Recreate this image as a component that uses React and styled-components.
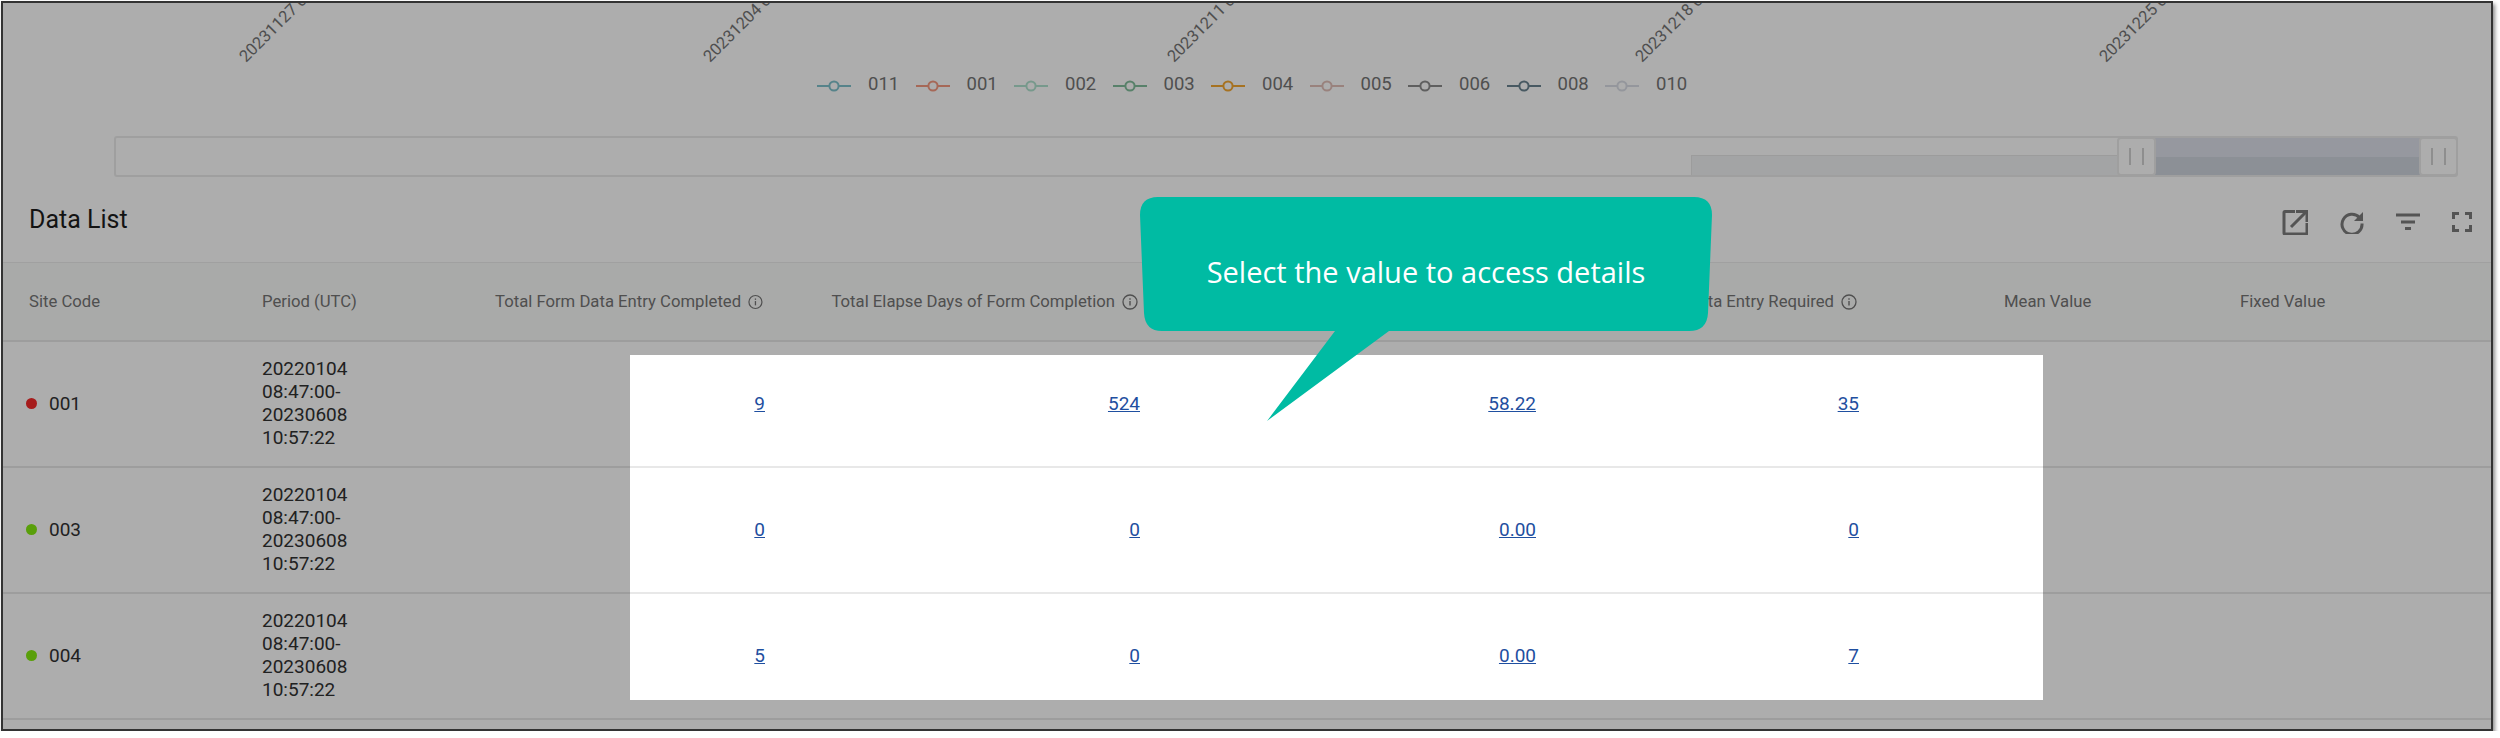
import React from 'react';
import styled, { createGlobalStyle } from 'styled-components';

const GlobalStyle = createGlobalStyle`
  html, body {
    margin: 0;
    padding: 0;
    background: #fff;
    font-family: Roboto, "Liberation Sans", sans-serif;
  }
`;

const legendItems = [
  { code: '011', color: '#7fc2cc' },
  { code: '001', color: '#f59a80' },
  { code: '002', color: '#b0e2cf' },
  { code: '003', color: '#82bf9c' },
  { code: '004', color: '#f5a832' },
  { code: '005', color: '#e2c0b9' },
  { code: '006', color: '#8c8c8c' },
  { code: '008', color: '#6a8491' },
  { code: '010', color: '#dadee6' },
];

const axisLabels = [
  { text: '20231127 00:00:00', x: 243 },
  { text: '20231204 00:00:00', x: 707 },
  { text: '20231211 00:00:00', x: 1171 },
  { text: '20231218 00:00:00', x: 1639 },
  { text: '20231225 00:00:00', x: 2103 },
];

const rows = [
  { code: '001', status: 'bad', values: ['9', '524', '58.22', '35'] },
  { code: '003', status: 'good', values: ['0', '0', '0.00', '0'] },
  { code: '004', status: 'good', values: ['5', '0', '0.00', '7'] },
];

const Frame = styled.div`
  position: relative;
  box-sizing: border-box;
  width: 2492px;
  height: 730px;
  margin: 1px 0 0 1px;
  border: 2px solid #333;
  background: #fff;
  overflow: hidden;
  box-shadow: 2px 3px 4px rgba(0, 0, 0, 0.45);
`;

const Page = styled.div`
  width: 100%;
`;

const ChartAxis = styled.svg`
  display: block;
  width: 100%;
  height: 62px;
  text {
    font-family: Roboto, sans-serif;
    font-size: 16.5px;
    fill: #757575;
  }
`;

const Legend = styled.div`
  display: flex;
  height: 40px;
  padding-left: 814px;
  align-items: center;
`;

const LegendItem = styled.div`
  display: flex;
  width: 98.5px;
  align-items: center;
  gap: 17px;
  font-size: 18.5px;
  color: #757575;
  svg {
    margin-top: 2px;
  }
  span {
    padding-bottom: 2px;
  }
`;

const Zoom = styled.div`
  position: relative;
  box-sizing: border-box;
  width: 2344px;
  height: 41px;
  margin: 31px 0 0 111px;
  border: 2px solid #ebebeb;
  border-radius: 3px;
`;

const ZoomShadow = styled.div`
  position: absolute;
  left: 1575px;
  right: 0;
  bottom: 0;
  height: 19px;
  background: #f1f2f4;
  border-top: 1px solid #e6e6e6;
  border-left: 1px solid #e6e6e6;
`;

const ZoomRange = styled.div`
  position: absolute;
  left: 2020px;
  right: 0;
  top: 0;
  bottom: 0;
  background: linear-gradient(#dee1ea 0 19px, #ced4de 19px);
`;

const ZoomHandle = styled.div`
  position: absolute;
  top: -1px;
  bottom: -1px;
  left: ${(p) => p.$left}px;
  box-sizing: border-box;
  width: 39px;
  display: flex;
  align-items: center;
  justify-content: center;
  gap: 11px;
  background: #fff;
  border: 2px solid #ebebeb;
  border-radius: 4px;
  i {
    width: 2px;
    height: 17px;
    background: #d1d1d1;
  }
`;

const Toolbar = styled.div`
  display: flex;
  height: 85px;
  align-items: center;
  justify-content: space-between;
  padding: 0 19px 0 26px;
  box-sizing: border-box;
`;

const Title = styled.h2`
  margin: 0;
  font-size: 25px;
  font-weight: 400;
  color: #1c1c1c;
`;

const Tools = styled.div`
  display: flex;
  align-items: center;
  gap: 32px;
  margin-top: 4px;
  color: #7d7d7d;
  svg {
    display: block;
    fill: none;
    stroke: currentColor;
  }
`;

const gridColumns = '233px 233px 270px 375px 396px 323px 381px 1fr';

const HeadRow = styled.div`
  display: grid;
  grid-template-columns: ${gridColumns};
  height: 80px;
  box-sizing: border-box;
  padding-left: 26px;
  align-items: center;
  background: #fafbfa;
  border-top: 1px solid #ececec;
  border-bottom: 2px solid #e8e8e8;
  font-size: 16.7px;
  color: #757575;
`;

const HeadCell = styled.div`
  display: flex;
  align-items: center;
  white-space: nowrap;
  gap: 7px;
  justify-content: ${(p) => (p.$num ? 'flex-end' : 'flex-start')};
  padding-left: ${(p) => (p.$inset ? '145px' : '0')};
  padding-right: ${(p) => (p.$num ? '2px' : '0')};
`;

const Row = styled.div`
  display: grid;
  grid-template-columns: ${gridColumns};
  height: 126px;
  box-sizing: border-box;
  padding-left: 26px;
  align-items: center;
  border-bottom: 2px solid #e8e8e8;
  font-size: 19px;
  line-height: 22.8px;
  color: #323232;
`;

const SiteCell = styled.div`
  display: flex;
  align-items: center;
  gap: 12px;
`;

const Dot = styled.span`
  width: 11px;
  height: 11px;
  margin-left: -3px;
  border-radius: 50%;
  background: ${(p) => (p.$status === 'bad' ? '#f52a2a' : '#84eb0f')};
`;

const Period = styled.div`
  width: 100px;
`;

const Value = styled.a`
  justify-self: end;
  color: #1f4fa0;
  text-decoration: underline;
`;

/* everything outside the box gets dimmed by the spread shadow */
const Spotlight = styled.div`
  position: absolute;
  left: 627px;
  top: 352px;
  width: 1413px;
  height: 345px;
  box-shadow: 0 0 0 3000px rgba(0, 0, 0, 0.32);
  pointer-events: none;
`;

const Callout = styled.div`
  position: absolute;
  left: 1137px;
  top: 194px;
  width: 572px;
  height: 134px;
  display: flex;
  align-items: center;
  justify-content: center;
  padding-top: 14px;
  box-sizing: border-box;
  color: #fff;
  font-family: "Open Sans", "Noto Sans", sans-serif;
  font-size: 29px;
  svg {
    position: absolute;
    left: 0;
    top: 0;
    overflow: visible;
  }
  span {
    position: relative;
  }
`;

const InfoIcon = () => (
  <svg width="16" height="16" viewBox="0 0 16 16" fill="none" stroke="#757575">
    <circle cx="8" cy="8" r="7" strokeWidth="1.3" />
    <path d="M8 7v4.6" strokeWidth="1.4" />
    <path d="M8 4.2v1.5" strokeWidth="1.4" />
  </svg>
);

const ExportIcon = () => (
  <svg width="26" height="26" viewBox="0 0 26 26" strokeWidth="3">
    <path d="M13 2.5H3a1 1 0 0 0-1 1V24a1 1 0 0 0 1 1h21a1 1 0 0 0 1-1V14" />
    <path d="M9 18L24 3" />
    <path d="M14 2.5h11V13" />
  </svg>
);

const RefreshIcon = () => (
  <svg width="24" height="24" viewBox="0 0 24 24" strokeWidth="3">
    <path d="M19.4 7.5A10 10 0 1 0 22 13.5" />
    <path d="M23 2v9h-9z" fill="currentColor" stroke="none" />
  </svg>
);

const FilterIcon = () => (
  <svg width="24" height="17" viewBox="0 0 24 17" strokeWidth="3">
    <path d="M0 2h24M5 9h14M9 15.5h6" />
  </svg>
);

const FullIcon = () => (
  <svg width="20" height="20" viewBox="0 0 20 20" strokeWidth="3">
    <path d="M1.5 7V1.5H7M13 1.5h5.5V7M18.5 13v5.5H13M7 18.5H1.5V13" />
  </svg>
);

const LegendMark = ({ color }) => (
  <svg width="34" height="12" viewBox="0 0 34 12" fill="none" stroke={color} strokeWidth="2">
    <path d="M0 6h12M22 6h12" />
    <circle cx="17" cy="6" r="4.6" />
  </svg>
);

const CalloutShape = () => (
  <svg width="572" height="134" viewBox="0 0 572 134">
    <path
      d="M18 0H554Q572 0 572 18L568 116Q567 134 549 134H249L127 224L195 134H22Q5 134 4 116L0 18Q0 0 18 0Z"
      fill="#00bba3"
    />
  </svg>
);

export default function App() {
  return (
    <Frame>
      <GlobalStyle />
      <Page>
        <ChartAxis>
          {axisLabels.map((l) => (
            <text key={l.text} transform={`translate(${l.x} 60) rotate(-45)`}>
              {l.text}
            </text>
          ))}
        </ChartAxis>
        <Legend>
          {legendItems.map((item) => (
            <LegendItem key={item.code}>
              <LegendMark color={item.color} />
              <span>{item.code}</span>
            </LegendItem>
          ))}
        </Legend>
        <Zoom>
          <ZoomShadow />
          <ZoomRange />
          <ZoomHandle $left={2001}><i /><i /></ZoomHandle>
          <ZoomHandle $left={2303}><i /><i /></ZoomHandle>
        </Zoom>
        <Toolbar>
          <Title>Data List</Title>
          <Tools>
            <ExportIcon />
            <RefreshIcon />
            <FilterIcon />
            <FullIcon />
          </Tools>
        </Toolbar>
        <HeadRow>
          <HeadCell>Site Code</HeadCell>
          <HeadCell>Period (UTC)</HeadCell>
          <HeadCell $num>Total Form Data Entry Completed <InfoIcon /></HeadCell>
          <HeadCell $num>Total Elapse Days of Form Completion <InfoIcon /></HeadCell>
          <HeadCell $num>Average Elapse Days of Form Completion <InfoIcon /></HeadCell>
          <HeadCell $num>Total Form Data Entry Required <InfoIcon /></HeadCell>
          <HeadCell $inset>Mean Value</HeadCell>
          <HeadCell>Fixed Value</HeadCell>
        </HeadRow>
        {rows.map((r) => (
          <Row key={r.code}>
            <SiteCell>
              <Dot $status={r.status} />
              {r.code}
            </SiteCell>
            <Period>20220104 08:47:00- 20230608 10:57:22</Period>
            {r.values.map((v, i) => (
              <Value key={i} href="#">{v}</Value>
            ))}
          </Row>
        ))}
      </Page>
      <Spotlight />
      <Callout>
        <CalloutShape />
        <span>Select the value to access details</span>
      </Callout>
    </Frame>
  );
}
